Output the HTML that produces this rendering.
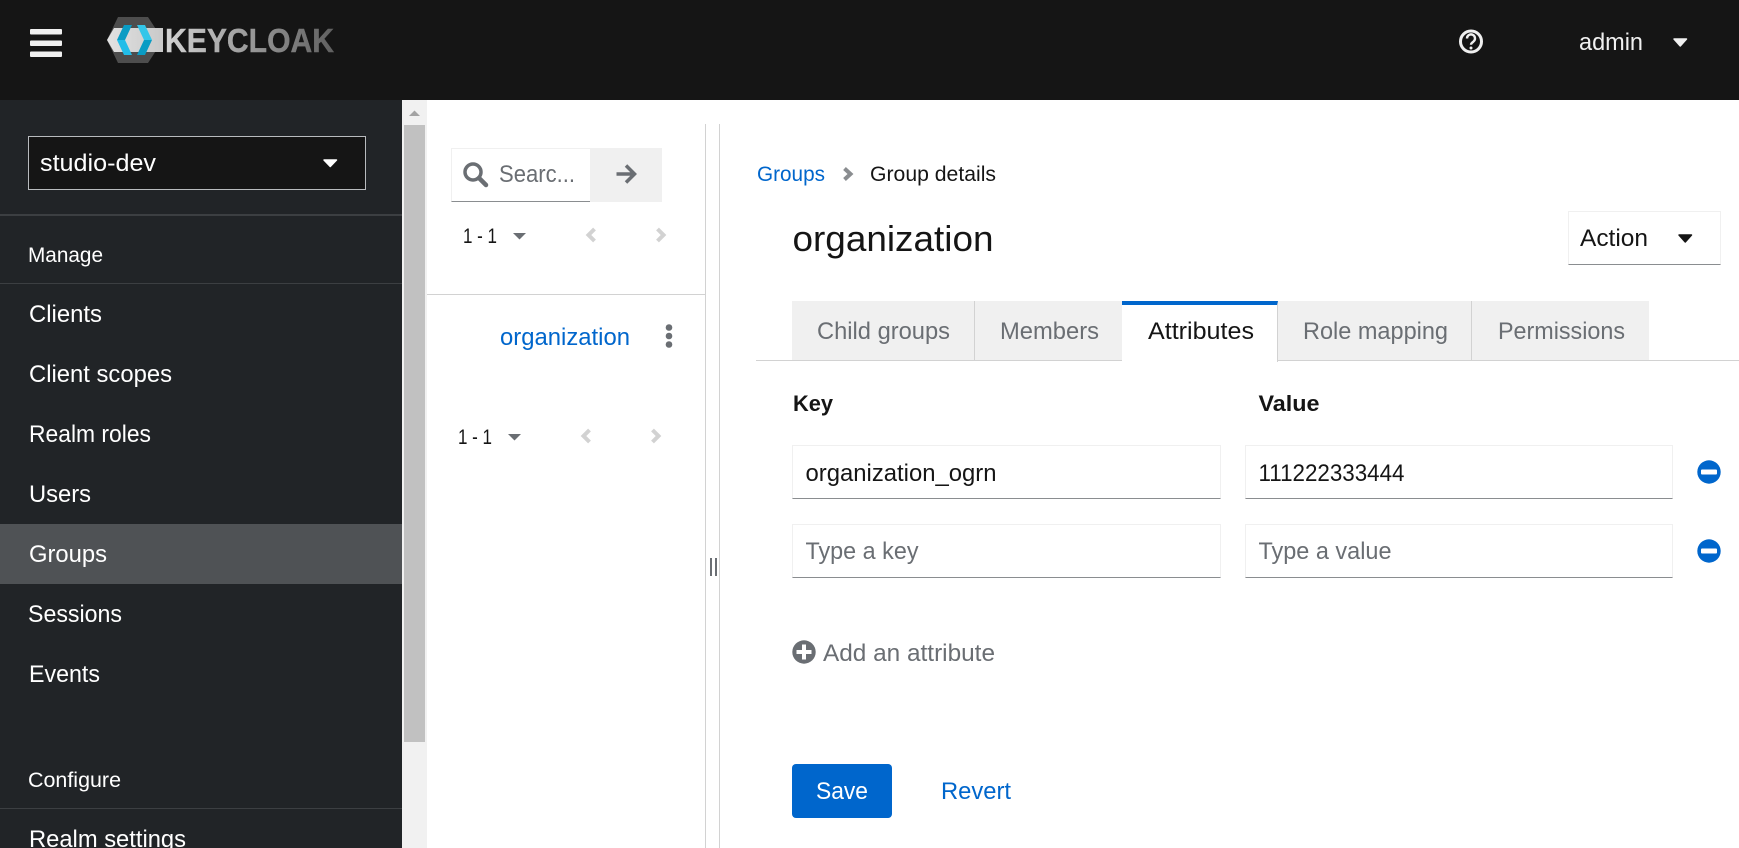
<!DOCTYPE html>
<html lang="en">
<head>
<meta charset="utf-8">
<title>Keycloak - Group details</title>
<style>
html,body{margin:0;padding:0;width:1739px;height:848px;overflow:hidden;background:#fff}
body{position:relative;font-family:"Liberation Sans",sans-serif}
.b{position:absolute;box-sizing:border-box}
#hdr{left:0;top:0;width:1739px;height:100px;background:#151515}
#side{left:0;top:100px;width:402px;height:748px;background:#212427}
#track{left:402px;top:100px;width:25px;height:748px;background:#f1f1f1}
#thumb{left:404px;top:125px;width:21px;height:617px;background:#c1c1c1}
.ln{background:#3c3f42;left:0;width:402px;height:1px}
.input{background:#fff;border:1px solid #f0f0f0;border-bottom:1px solid #8a8d90}
.tab{top:301px;height:60px;background:#f0f0f0;border-bottom:1px solid #d2d2d2}
svg{position:absolute;left:0;top:0}
text{font-family:"Liberation Sans",sans-serif}
</style>
</head>
<body>
<div class="b" id="hdr"></div>
<div class="b" id="side"></div>
<div class="b" id="track"></div>
<div class="b" id="thumb"></div>
<div class="b" style="left:28px;top:136px;width:338px;height:54px;background:#151515;border:1px solid #b8bbbe"></div>
<div class="b ln" style="top:214px;height:2px"></div>
<div class="b ln" style="top:283px"></div>
<div class="b" style="left:0;top:524px;width:402px;height:60px;background:#4f5255"></div>
<div class="b ln" style="top:808px"></div>

<div class="b" style="left:705px;top:124px;width:1px;height:724px;background:#d2d2d2"></div>
<div class="b" style="left:719px;top:124px;width:1px;height:724px;background:#d2d2d2"></div>
<div class="b" style="left:710px;top:558px;width:1.5px;height:18px;background:#6a6e73"></div>
<div class="b" style="left:715px;top:558px;width:1.5px;height:18px;background:#6a6e73"></div>
<div class="b" style="left:427px;top:294px;width:278px;height:1px;background:#d2d2d2"></div>

<div class="b input" style="left:451px;top:148px;width:139px;height:54px;border-right:0"></div>
<div class="b" style="left:590px;top:148px;width:72px;height:54px;background:#f0f0f0"></div>

<div class="b input" style="left:1568px;top:211px;width:153px;height:54px"></div>

<div class="b" style="left:756px;top:360px;width:983px;height:1px;background:#d2d2d2"></div>
<div class="b tab" style="left:792px;width:183px;border-right:1px solid #d2d2d2"></div>
<div class="b tab" style="left:975px;width:148px;border-right:1px solid #d2d2d2"></div>
<div class="b" style="left:1122px;top:301px;width:156px;height:61px;background:#fff;border-top:4px solid #06c;border-right:1px solid #d2d2d2"></div>
<div class="b tab" style="left:1278px;width:194px;border-right:1px solid #d2d2d2"></div>
<div class="b tab" style="left:1472px;width:177px"></div>

<div class="b input" style="left:792px;top:445px;width:429px;height:54px"></div>
<div class="b input" style="left:1245px;top:445px;width:428px;height:54px"></div>
<div class="b input" style="left:792px;top:524px;width:429px;height:54px"></div>
<div class="b input" style="left:1245px;top:524px;width:428px;height:54px"></div>

<div class="b" style="left:792px;top:764px;width:100px;height:54px;background:#06c;border-radius:4px"></div>

<svg width="1739" height="848" viewBox="0 0 1739 848" xmlns="http://www.w3.org/2000/svg">
<defs>
<linearGradient id="kc" x1="0" x2="1" y1="0" y2="0"><stop offset="0" stop-color="#d4d4d4"/><stop offset=".5" stop-color="#999"/><stop offset="1" stop-color="#606060"/></linearGradient>
<linearGradient id="band" x1="0" x2="1" y1="0" y2="0"><stop offset="0" stop-color="#e2e2e2"/><stop offset="1" stop-color="#c9c9c9"/></linearGradient>
</defs>

<!-- hamburger -->
<g fill="#f0f0f0">
<rect x="30" y="29" width="32" height="5.5" rx="1"/>
<rect x="30" y="40.5" width="32" height="5.5" rx="1"/>
<rect x="30" y="51.5" width="32" height="5.5" rx="1"/>
</g>

<!-- logo -->
<polygon points="118,17 148,17 163,40 148,63 118,63 107,40" fill="#4d4d4d"/>
<polygon points="114,28 163,28 163,52 114,52 107,40" fill="url(#band)"/>
<polygon points="124,25 132,25 125,40 117,40" fill="#0a9cc4"/>
<polygon points="117,40 125,40 132,55 124,55" fill="#22bde8"/>
<polygon points="145,25 137,25 144,40 152,40" fill="#33c6e9"/>
<polygon points="152,40 144,40 137,55 145,55" fill="#0a9cc4"/>
<text x="165" y="52" font-size="33" font-weight="700" fill="url(#kc)" stroke="url(#kc)" stroke-width=".4" textLength="169" lengthAdjust="spacingAndGlyphs">KEYCLOAK</text>

<!-- header right -->
<circle cx="1471" cy="41.5" r="10.5" fill="none" stroke="#f0f0f0" stroke-width="3"/>
<path d="M1467 38.500a4 4 0 1 1 6.300 3.200c-1.500 1-2.300 1.600-2.300 3" fill="none" stroke="#f0f0f0" stroke-width="2.400"/>
<circle cx="1471" cy="48" r="1.500" fill="#f0f0f0"/>
<text x="1579" y="50" font-size="24" fill="#f0f0f0" textLength="64" lengthAdjust="spacingAndGlyphs">admin</text>
<path d="M1674 39h12.500l-6.250 7z" fill="#f0f0f0" stroke="#f0f0f0" stroke-width="1.500" stroke-linejoin="round"/>

<!-- sidebar -->
<g fill="#fff">
<text x="40" y="171" font-size="24" textLength="116" lengthAdjust="spacingAndGlyphs">studio-dev</text>
<path d="M324 160h12.500l-6.250 6.500z" stroke="#fff" stroke-width="1.500" stroke-linejoin="round"/>
<text x="28" y="262" font-size="21" textLength="75" lengthAdjust="spacingAndGlyphs">Manage</text>
<text x="29" y="322" font-size="24" textLength="73" lengthAdjust="spacingAndGlyphs">Clients</text>
<text x="29" y="382" font-size="24" textLength="143" lengthAdjust="spacingAndGlyphs">Client scopes</text>
<text x="29" y="442" font-size="24" textLength="122" lengthAdjust="spacingAndGlyphs">Realm roles</text>
<text x="29" y="502" font-size="24" textLength="62" lengthAdjust="spacingAndGlyphs">Users</text>
<text x="29" y="562" font-size="24" textLength="78" lengthAdjust="spacingAndGlyphs">Groups</text>
<text x="28" y="622" font-size="24" textLength="94" lengthAdjust="spacingAndGlyphs">Sessions</text>
<text x="29" y="682" font-size="24" textLength="71" lengthAdjust="spacingAndGlyphs">Events</text>
<text x="28" y="787" font-size="21" textLength="93" lengthAdjust="spacingAndGlyphs">Configure</text>
<text x="29" y="847" font-size="24" textLength="157" lengthAdjust="spacingAndGlyphs">Realm settings</text>
</g>
<path d="M409 116l5.500-5.500 5.500 5.500z" fill="#a3a3a3"/>

<!-- tree panel -->
<circle cx="473" cy="172" r="8" fill="none" stroke="#6a6e73" stroke-width="3.500"/>
<path d="M479 178l7 7" stroke="#6a6e73" stroke-width="4.500" stroke-linecap="round"/>
<text x="499" y="182" font-size="24" fill="#6a6e73" textLength="76" lengthAdjust="spacingAndGlyphs">Searc...</text>
<path d="M616.500 174h18M626 165.500l8.500 8.500-8.500 8.500" fill="none" stroke="#6a6e73" stroke-width="3.500"/>

<text x="463" y="243" font-size="21" fill="#151515" textLength="34" lengthAdjust="spacingAndGlyphs">1 - 1</text>
<path d="M513 233h13l-6.500 6.500z" fill="#6a6e73"/>
<path d="M594.500 229l-6 6 6 6M657.500 229l6 6-6 6" fill="none" stroke="#d2d2d2" stroke-width="4"/>

<text x="500" y="345" font-size="24" fill="#06c" textLength="130" lengthAdjust="spacingAndGlyphs">organization</text>
<circle cx="669" cy="327.500" r="3.300" fill="#6a6e73"/>
<circle cx="669" cy="336" r="3.300" fill="#6a6e73"/>
<circle cx="669" cy="344.500" r="3.300" fill="#6a6e73"/>

<text x="458" y="444" font-size="21" fill="#151515" textLength="34" lengthAdjust="spacingAndGlyphs">1 - 1</text>
<path d="M508 434h13l-6.500 6.500z" fill="#6a6e73"/>
<path d="M589.500 430l-6 6 6 6M652.500 430l6 6-6 6" fill="none" stroke="#d2d2d2" stroke-width="4"/>

<!-- breadcrumb and title -->
<text x="757" y="181" font-size="21" fill="#06c" textLength="68" lengthAdjust="spacingAndGlyphs">Groups</text>
<path d="M844.500 168.500l6 5.500-6 5.500" fill="none" stroke="#8a8d90" stroke-width="4"/>
<text x="870" y="181" font-size="21" fill="#151515" textLength="126" lengthAdjust="spacingAndGlyphs">Group details</text>
<text x="792.500" y="251" font-size="36" fill="#151515" textLength="201" lengthAdjust="spacingAndGlyphs">organization</text>

<text x="1580" y="246" font-size="24" fill="#151515" textLength="68" lengthAdjust="spacingAndGlyphs">Action</text>
<path d="M1679 235h12.500l-6.250 7z" fill="#151515" stroke="#151515" stroke-width="1.500" stroke-linejoin="round"/>

<!-- tabs -->
<g font-size="24" fill="#6a6e73">
<text x="817" y="339" textLength="133" lengthAdjust="spacingAndGlyphs">Child groups</text>
<text x="1000" y="339" textLength="99" lengthAdjust="spacingAndGlyphs">Members</text>
<text x="1148" y="339" fill="#151515" textLength="106" lengthAdjust="spacingAndGlyphs">Attributes</text>
<text x="1303" y="339" textLength="145" lengthAdjust="spacingAndGlyphs">Role mapping</text>
<text x="1498" y="339" textLength="127" lengthAdjust="spacingAndGlyphs">Permissions</text>
</g>

<!-- form -->
<text x="793" y="411" font-size="22" font-weight="700" fill="#151515" textLength="40" lengthAdjust="spacingAndGlyphs">Key</text>
<text x="1258.500" y="411" font-size="22" font-weight="700" fill="#151515" textLength="61" lengthAdjust="spacingAndGlyphs">Value</text>
<text x="805.500" y="481" font-size="24" fill="#151515" textLength="191" lengthAdjust="spacingAndGlyphs">organization_ogrn</text>
<text x="1258.500" y="481" font-size="24" fill="#151515" textLength="146" lengthAdjust="spacingAndGlyphs">111222333444</text>
<text x="805.500" y="559" font-size="24" fill="#6a6e73" textLength="113" lengthAdjust="spacingAndGlyphs">Type a key</text>
<text x="1258.500" y="559" font-size="24" fill="#6a6e73" textLength="133" lengthAdjust="spacingAndGlyphs">Type a value</text>

<circle cx="1709" cy="472" r="11.700" fill="#06c"/>
<rect x="1701" y="469.500" width="16" height="5" rx="1" fill="#fff"/>
<circle cx="1709" cy="551" r="11.700" fill="#06c"/>
<rect x="1701" y="548.500" width="16" height="5" rx="1" fill="#fff"/>

<circle cx="804" cy="652" r="11.700" fill="#6a6e73"/>
<path d="M796.500 652h15M804 644.500v15" stroke="#fff" stroke-width="4"/>
<text x="823" y="661" font-size="24" fill="#6a6e73" textLength="172" lengthAdjust="spacingAndGlyphs">Add an attribute</text>

<text x="816" y="799" font-size="24" fill="#fff" textLength="52" lengthAdjust="spacingAndGlyphs">Save</text>
<text x="941" y="799" font-size="24" fill="#06c" textLength="70" lengthAdjust="spacingAndGlyphs">Revert</text>
</svg>
</body>
</html>
